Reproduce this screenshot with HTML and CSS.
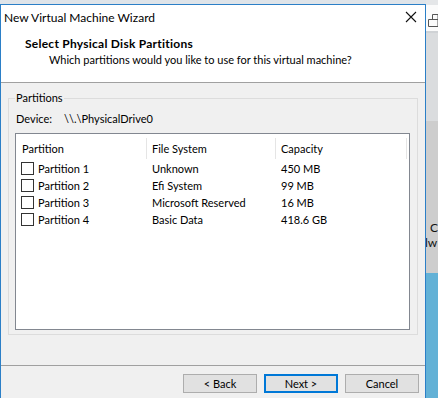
FILE: index.html
```html
<!DOCTYPE html>
<html lang="en">
<head>
    <meta charset="UTF-8" />
    <title>New Virtual Machine Wizard</title>
    <link rel="stylesheet" href="styles.css">
</head>
<body>
    <div class="screen">
        <!-- Wizard window -->
        <div class="window">
            <div class="titlebar">
                <span class="title">New Virtual Machine Wizard</span>
                <svg class="close" width="12" height="12" viewBox="0 0 12 12">
                    <path d="M1 1 L11 11 M11 1 L1 11" stroke="#111" stroke-width="1.1" fill="none" />
                </svg>
            </div>

            <div class="header">
                <h1>Select Physical Disk Partitions</h1>
                <p>Which partitions would you like to use for this virtual machine?</p>
            </div>

            <div class="content">
                <fieldset class="group">
                    <legend>Partitions</legend>
                    <div class="device">
                        <span class="device-label">Device:</span>
                        <span class="device-path">\\.\PhysicalDrive0</span>
                    </div>

                    <div class="listbox">
                        <div class="list-head">
                            <div class="col col-first">Partition</div>
                            <div class="col">File System</div>
                            <div class="col col-last">Capacity</div>
                        </div>
                        <div class="list-row">
                            <div class="col col-first"><span class="check"></span>Partition 1</div>
                            <div class="col">Unknown</div>
                            <div class="col">450 MB</div>
                        </div>
                        <div class="list-row">
                            <div class="col col-first"><span class="check"></span>Partition 2</div>
                            <div class="col">Efi System</div>
                            <div class="col">99 MB</div>
                        </div>
                        <div class="list-row">
                            <div class="col col-first"><span class="check"></span>Partition 3</div>
                            <div class="col">Microsoft Reserved</div>
                            <div class="col">16 MB</div>
                        </div>
                        <div class="list-row">
                            <div class="col col-first"><span class="check"></span>Partition 4</div>
                            <div class="col">Basic Data</div>
                            <div class="col">418.6 GB</div>
                        </div>
                    </div>
                </fieldset>
            </div>

            <div class="footer">
                <button class="btn">&lt; Back</button>
                <button class="btn btn-default">Next &gt;</button>
                <button class="btn">Cancel</button>
            </div>
        </div>

        <!-- bit of the desktop behind the dialog -->
        <div class="desktop">
            <div class="desk-top"></div>
            <div class="desk-bar">
                <svg width="10" height="14" viewBox="0 0 10 14">
                    <path d="M4.5 0.5 H10 V5.5 H4.5 Z M0.5 5.5 H10 V12.5 H0.5 Z" stroke="#555" stroke-width="1" fill="none" />
                </svg>
            </div>
            <div class="desk-grey"></div>
            <div class="desk-light">
                <span class="desk-c">C</span>
                <span class="desk-w">lw</span>
            </div>
            <div class="desk-blue"></div>
        </div>
    </div>
</body>
</html>
```

FILE: styles.css
```css
* {
    box-sizing: border-box;
    margin: 0;
    padding: 0;
}

html, body {
    height: 100%;
}

body {
    font-family: 'Segoe UI', Lato, 'Noto Sans', sans-serif;
    font-size: 11px;
    color: #000;
    background: #dfe4e9;
    overflow: hidden;
}

.screen {
    display: flex;
    height: 398px;
}

.window {
    width: 428px;
    height: 394px;
    margin-top: 4px;
    border: 1px solid #2b7fc7;
    border-bottom: none;
    background: #f0f0f0;
    display: flex;
    flex-direction: column;
}

.titlebar {
    height: 26px;
    background: #fff;
    display: flex;
    align-items: center;
    justify-content: space-between;
    padding: 0 8px 0 3px;
}

.title {
    font-size: 12px;
    margin-top: -2px;
}

.close {
    margin-top: -2px;
}

/* white band with the step title */
.header {
    height: 52px;
    background: #fff;
    border-bottom: 1px solid #a0a0a0;
    padding: 5px 0 0 24px;
}

.header h1 {
    font-size: 12px;
    font-weight: 700;
    letter-spacing: 0.25px;
    line-height: 16px;
}

.header p {
    line-height: 16px;
    padding-left: 24px;
}

.content {
    flex: 1;
    padding: 7px 7px 0 7px;
}

.group {
    border: 1px solid #dcdcdc;
    padding: 0 7px 4px 6px;
}

.group legend {
    padding: 0 1px;
    line-height: 16px;
}

.device {
    display: flex;
    line-height: 16px;
    margin-top: 5px;
    padding-left: 1px;
}

.device-label {
    width: 48px;
}

.listbox {
    margin-top: 6px;
    height: 197px;
    background: #fff;
    border: 1px solid #828790;
}

.list-head,
.list-row {
    display: grid;
    grid-template-columns: 131px 129px 1fr;
}

.list-head {
    height: 26px;
    align-items: center;
}

.list-head .col {
    border-right: 1px solid #e5e5e5;
    height: 21px;
    line-height: 21px;
    margin-top: 2px;
}

.list-head .col-last {
    margin-right: 2px;
}

.col {
    padding-left: 5px;
    white-space: nowrap;
}

.col.col-first {
    padding-left: 6px;
}

.list-row {
    height: 17px;
    line-height: 17px;
}

.list-row .col-first {
    display: flex;
    align-items: center;
    padding-left: 5px;
}

.check {
    width: 13px;
    height: 13px;
    border: 1px solid #333;
    background: #fff;
    margin-right: 4px;
}

.footer {
    height: 33px;
    border-top: 1px solid #a0a0a0;
    display: flex;
    justify-content: flex-end;
    gap: 7px;
    padding: 8px 6px 0 0;
}

.btn {
    width: 74px;
    height: 19px;
    font-family: inherit;
    font-size: 11px;
    background: #e1e1e1;
    border: 1px solid #adadad;
    color: #000;
}

.btn-default {
    border: 2px solid #0078d7;
}

/* desktop strip on the right */
.desktop {
    flex: 1;
    display: flex;
    flex-direction: column;
}

.desk-top {
    height: 5px;
    background: #e4e6e8;
}

.desk-bar {
    height: 28px;
    background: #fbfbfb;
    border-bottom: 2px solid #cfd2d5;
    padding: 9px 0 0 2px;
}

.desk-grey {
    height: 88px;
    background: #dadcde;
}

.desk-light {
    height: 152px;
    background: #cdcdcd;
    display: flex;
    flex-direction: column;
    gap: 2px;
    padding-top: 100px;
    padding-left: 4px;
    font-size: 12px;
    color: #111;
    overflow: hidden;
}

.desk-c,
.desk-w {
    line-height: 13px;
}

.desk-w {
    margin-left: -5px;
}

.desk-blue {
    flex: 1;
    background: #62b1d6;
}
```
